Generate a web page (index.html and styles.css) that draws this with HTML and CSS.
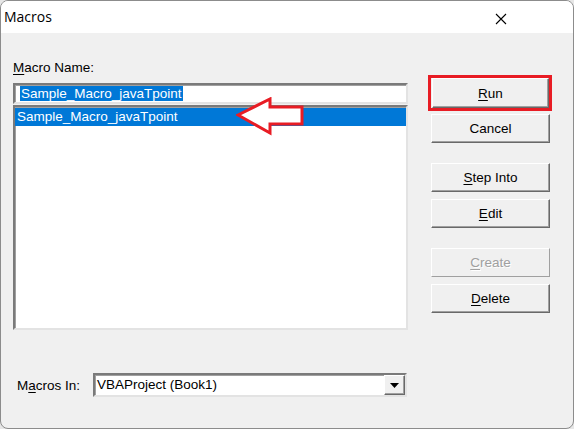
FILE: index.html
```html
<!DOCTYPE html>
<html>
<head>
<meta charset="utf-8">
<link rel="stylesheet" href="styles.css">
</head>
<body>
<div class="window">
  <div class="titlebar">
    <span class="title">Macros</span>
    <span class="close">
      <svg width="12" height="12" viewBox="0 0 12 12"><path d="M1 1 L11 11 M11 1 L1 11" stroke="#000" stroke-width="1.1" fill="none"/></svg>
    </span>
  </div>
  <div class="content">
    <div class="left">
      <div class="label"><u>M</u>acro Name:</div>
      <div class="input"><span class="sel">Sample_Macro_javaTpoint</span></div>
      <div class="list">
        <div class="row selected">Sample_Macro_javaTpoint</div>
        <svg class="arrow" width="70" height="40" viewBox="0 0 70 40">
          <polygon points="2,18 34,2 34,10 66,10 66,27 34,27 34,36" fill="#fff" stroke="#e81c24" stroke-width="3" stroke-linejoin="miter"/>
        </svg>
      </div>
      <div class="combo-row">
        <span class="combo-label">M<u>a</u>cros In:</span>
        <div class="combo">
          <span class="combo-text">VBAProject (Book1)</span>
          <span class="drop"><svg width="9" height="5" viewBox="0 0 9 5"><polygon points="0,0 9,0 4.5,5" fill="#000"/></svg></span>
        </div>
      </div>
    </div>
    <div class="right">
      <div class="focus-wrap"><div class="btn run"><u>R</u>un</div></div>
      <div class="btn cancel">Cancel</div>
      <div class="btn step"><u>S</u>tep Into</div>
      <div class="btn edit"><u>E</u>dit</div>
      <div class="btn create disabled"><u>C</u>reate</div>
      <div class="btn delete"><u>D</u>elete</div>
    </div>
  </div>
</div>
</body>
</html>
```
FILE: styles.css
```css
* { box-sizing: border-box; }
html, body { margin: 0; padding: 0; background: #e6e6e6; }
body { width: 574px; height: 429px; overflow: hidden; font-family: "Liberation Sans", Arial, sans-serif; font-size: 13.5px; color: #000; }
.window {
  width: 574px; height: 429px;
  background: #f0f0f0;
  border: 1px solid #8c8c8c;
  border-radius: 8px;
  overflow: hidden;
  display: flex; flex-direction: column;
}
.titlebar {
  height: 32px; background: #fff;
  display: flex; align-items: center; justify-content: space-between;
  padding: 0 66px 0 3px;
  flex: none;
}
.title { font-family: "Open Sans", "Noto Sans", sans-serif; font-size: 14px; color: #000; margin-top: -2px; }
.close { display: flex; width: 12px; height: 12px; margin-top: 3px; }
.content {
  display: flex;
  padding: 27px 0 0 12px;
  flex: 1;
}
.left { width: 395px; display: flex; flex-direction: column; }
.label { height: 16px; line-height: 16px; margin-bottom: 7px; }
.input, .list, .combo {
  background: #fff;
  border-style: solid;
  border-width: 2px;
  border-color: #7a7a7a #e3e3e3 #e3e3e3 #7a7a7a;
  box-shadow: inset 1px 1px 0 #a0a0a0;
}
.input { height: 21px; padding: 1px 0 0 5px; line-height: 15px; }
.sel { background: #0078d7; color: #fff; display: inline-block; padding: 0 1px; line-height: 15px; }
.list { margin-top: 1px; height: 225px; position: relative; padding: 1px 0 0 0; }
.row { height: 18px; line-height: 18px; padding-left: 2px; }
.row.selected { background: #0078d7; color: #fff; }
.arrow { position: absolute; left: 221px; top: -10px; }
.combo-row { margin-top: 43px; display: flex; align-items: center; }
.combo-label { width: 80px; padding-left: 4px; }
.combo { width: 314px; height: 24px; display: flex; align-items: center; justify-content: space-between; padding: 0 0 0 2px; }
.combo-text { line-height: 18px; }
.drop {
  width: 21px; height: 20px;
  background: #f0f0f0;
  border-style: solid; border-width: 1px;
  border-color: #fff #696969 #696969 #fff;
  box-shadow: inset -1px -1px 0 #a0a0a0;
  display: flex; align-items: center; justify-content: center;
}
.right { margin-left: 20px; margin-top: 15px; display: flex; flex-direction: column; align-items: flex-start; }
.btn {
  width: 119px; height: 29px;
  background: #f0f0f0;
  border-style: solid; border-width: 1px;
  border-color: #fff #696969 #696969 #fff;
  box-shadow: inset -1px -1px 0 #a0a0a0;
  display: flex; align-items: center; justify-content: center;
  margin-left: 3px;
}
.focus-wrap { border: 3px solid #e81c24; width: 124px; height: 36px; padding: 0 0 0 1px; }
.btn.run { width: 117px; height: 30px; margin: 0; }
.cancel { margin-top: 3px; }
.step { margin-top: 20px; }
.edit { margin-top: 7px; }
.create { margin-top: 20px; }
.delete { margin-top: 7px; }
.disabled { color: #a0a0a0; text-shadow: 1px 1px 0 #fff; border-color: #fff #a0a0a0 #a0a0a0 #fff; box-shadow: none; }
u { text-decoration: underline; text-underline-offset: 2px; }
```
